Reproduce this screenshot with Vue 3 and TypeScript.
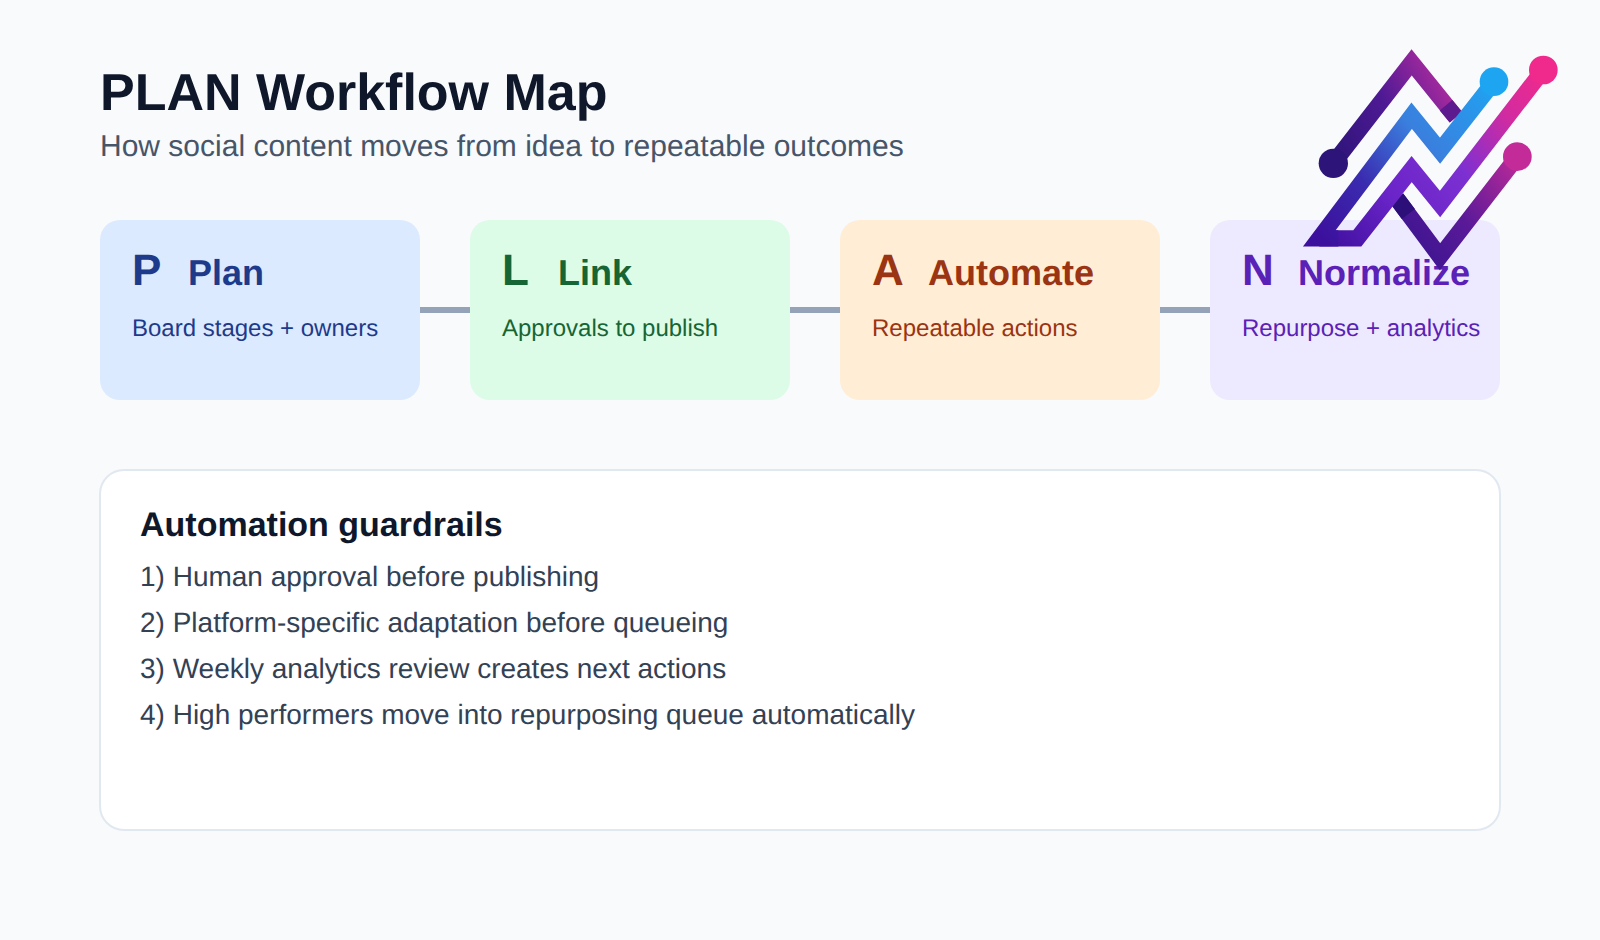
<script setup lang="ts">
interface Step { letter: string; name: string; note: string; tone: string }
const steps: Step[] = [
  { letter: 'P', name: 'Plan', note: 'Board stages + owners', tone: 'blue' },
  { letter: 'L', name: 'Link', note: 'Approvals to publish', tone: 'green' },
  { letter: 'A', name: 'Automate', note: 'Repeatable actions', tone: 'orange' },
  { letter: 'N', name: 'Normalize', note: 'Repurpose + analytics', tone: 'violet' },
]
const rules: string[] = [
  '1) Human approval before publishing',
  '2) Platform-specific adaptation before queueing',
  '3) Weekly analytics review creates next actions',
  '4) High performers move into repurposing queue automatically',
]
</script>

<template>
  <main class="page">
    <h1 class="title">PLAN Workflow Map</h1>
    <p class="subtitle">How social content moves from idea to repeatable outcomes</p>

    <section class="flow">
      <template v-for="(s, i) in steps" :key="s.letter">
        <div v-if="i > 0" class="link"></div>
        <article class="card" :class="s.tone">
          <div class="head">
            <span class="letter">{{ s.letter }}</span>
            <span class="name">{{ s.name }}</span>
          </div>
          <p class="note">{{ s.note }}</p>
        </article>
      </template>
    </section>

    <section class="panel">
      <h2 class="panel-title">Automation guardrails</h2>
      <p v-for="r in rules" :key="r" class="rule">{{ r }}</p>
    </section>

    <svg class="logo" viewBox="0 0 900 780" aria-hidden="true">
      <defs>
        <linearGradient id="dkA" gradientUnits="userSpaceOnUse" x1="160" y1="400" x2="520" y2="200">
          <stop offset="0" stop-color="#2c1478" />
          <stop offset="0.55" stop-color="#4f1a94" />
          <stop offset="1" stop-color="#a82a9e" />
        </linearGradient>
        <linearGradient id="dkB" gradientUnits="userSpaceOnUse" x1="350" y1="640" x2="720" y2="370">
          <stop offset="0" stop-color="#3a1490" />
          <stop offset="0.45" stop-color="#5a1a98" />
          <stop offset="1" stop-color="#c22b98" />
        </linearGradient>
        <linearGradient id="bl" gradientUnits="userSpaceOnUse" x1="650" y1="150" x2="120" y2="625">
          <stop offset="0" stop-color="#1ea5f2" />
          <stop offset="0.4" stop-color="#3a7fde" />
          <stop offset="0.7" stop-color="#3a2cb0" />
          <stop offset="1" stop-color="#3c0f9c" />
        </linearGradient>
        <linearGradient id="vi" gradientUnits="userSpaceOnUse" x1="130" y1="650" x2="790" y2="120">
          <stop offset="0" stop-color="#3c0f9c" />
          <stop offset="0.3" stop-color="#6a24c8" />
          <stop offset="0.55" stop-color="#7c30d2" />
          <stop offset="0.8" stop-color="#d22ba0" />
          <stop offset="1" stop-color="#f02a8c" />
        </linearGradient>
      </defs>
      <g fill="none" stroke-width="49" stroke-miterlimit="10">
        <path d="M160 400 L395 97 L528 262" stroke="url(#dkA)" />
        <path d="M350 505 L480 680 L712 380" stroke="url(#dkB)" />
        <path d="M498 226 L528 262" stroke="#5d1a8e" />
        <path d="M350 505 L385 552" stroke="#2c0f78" />
        <path d="M118 625 L232 625 L395 417 L480 522 L790 120" stroke="url(#vi)" />
        <path d="M642 155 L480 362 L395 257 L118 625 L175 625" stroke="url(#bl)" />
      </g>
      <circle cx="160" cy="400" r="44" fill="#2c1478" />
      <circle cx="642" cy="155" r="43" fill="#1ea5f2" />
      <circle cx="790" cy="120" r="43" fill="#f02a8c" />
      <circle cx="712" cy="380" r="43" fill="#c22b98" />
    </svg>
  </main>
</template>

<style scoped>
.page {
  position: relative;
  box-sizing: border-box;
  width: 1600px;
  height: 940px;
  padding: 63px 100px 0;
  background: #f8fafc;
  font-family: "Liberation Sans", Arial, sans-serif;
  text-rendering: geometricPrecision;
  overflow: hidden;
}
.title {
  margin: 0;
  font-size: 52px;
  line-height: 60px;
  font-weight: 700;
  color: #0f172a;
}
.subtitle {
  margin: 6px 0 0;
  font-size: 30px;
  line-height: 36px;
  color: #475569;
}
.flow {
  display: flex;
  align-items: flex-start;
  margin-top: 55px;
}
.link {
  flex: 0 0 50px;
  height: 6px;
  margin-top: 87px;
  background: #94a3b8;
}
.card {
  box-sizing: border-box;
  flex: 0 0 320px;
  height: 180px;
  padding: 23px 0 0 32px;
  border-radius: 20px;
}
.card:last-child { flex-basis: 290px; }
.head {
  display: flex;
  align-items: baseline;
  height: 56px;
}
.letter { flex: 0 0 56px; font-size: 44px; line-height: 56px; font-weight: 700; }
.name { font-size: 36px; line-height: 56px; font-weight: 700; }
.note { margin: 15px 0 0; font-size: 24px; line-height: 30px; }
.blue { background: #dbeafe; color: #1e3a8a; }
.green { background: #dcfce7; color: #166534; }
.orange { background: #ffedd5; color: #9a3412; }
.violet { background: #ede9fe; color: #5b21b6; }
.panel {
  box-sizing: border-box;
  width: 1402px;
  height: 362px;
  margin: 69px 0 0 -1px;
  padding: 33px 39px 0;
  background: #ffffff;
  border: 2px solid #e2e8f0;
  border-radius: 25px;
}
.panel-title {
  margin: 0 0 8px;
  font-size: 34px;
  line-height: 42px;
  font-weight: 700;
  color: #0f172a;
}
.rule {
  margin: 0;
  font-size: 28px;
  line-height: 46px;
  color: #334155;
}
.logo {
  position: absolute;
  left: 1280px;
  top: 30px;
  width: 300px;
  height: 260px;
}
</style>
<style>
html, body { margin: 0; background: #f8fafc; }
</style>
